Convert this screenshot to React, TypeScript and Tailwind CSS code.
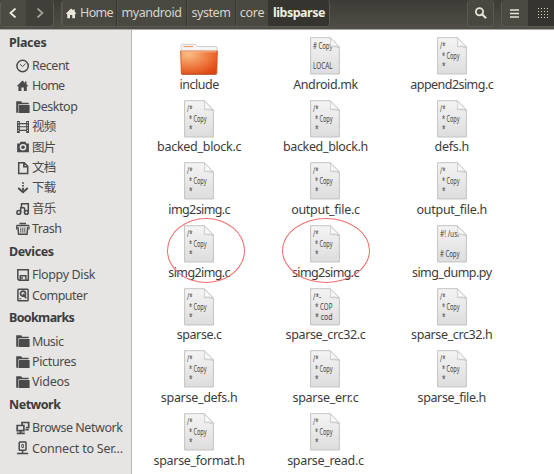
import type { ReactNode } from "react";

type Glyph =
  | "recent" | "home" | "folder" | "film" | "camera" | "doc" | "download"
  | "music" | "trash" | "floppy" | "disk" | "network" | "server";

const glyphs: Record<Glyph, ReactNode> = {
  recent: (
    <g fill="none" stroke="currentColor">
      <circle cx="6.6" cy="7" r="5.7" strokeWidth="1.5" />
      <path d="M4 5.2 6.500 7.600 9.500 4.800" strokeWidth="1" />
    </g>
  ),
  home: <path d="M6.500 1.600.7 7.200h1.700v4.900h3V8.600h2.400v3.500h3V7.200h1.700l-2-2V2.600H9v1.300z" />,
  folder: (
    <g>
      <path d="M.2 1.200h5l1 1.600h6.500v1.400H3L2 5v7.800H.2z" />
      <path d="M3.200 5h10.400v7.900H2.500V5.600z" />
    </g>
  ),
  film: (
    <path d="M1 1h2.800v2h6.400V1H13v12h-2.800v-2H3.800v2H1zm2.800 3.200v5.500h6.400V4.200zm0 2.100h6.400v1H3.800zM1.900 2.200v1h1v-1zm0 2.600v1h1v-1zm0 2.600v1h1v-1zm0 2.600v1h1v-1zm9.200-7.800v1h1v-1zm0 2.600v1h1v-1zm0 2.600v1h1v-1zm0 2.600v1h1v-1z" fillRule="evenodd" />
  ),
  camera: (
    <g>
      <path fillRule="evenodd" d="M4.400 1.700h5.200l.7 1.800h2.600v8.800H1.100V3.500h2.600zM7 4a3.300 3.300 0 1 0 0 6.600A3.300 3.300 0 0 0 7 4z" />
      <circle cx="7" cy="7.300" r="1.800" />
    </g>
  ),
  doc: <path d="M2.700 1.700h5.500l3.500 3.500v7.200h-9zM7.800 1.700v4h4" fill="none" stroke="currentColor" strokeWidth="1.500" />,
  download: (
    <g>
      <path d="M2.300 7 7 11.300 11.700 7" fill="none" stroke="currentColor" strokeWidth="1.900" />
      <path d="M6.100 1.300h1.800v1.500H6.100zM6.100 4h1.800v1.600H6.100zM6.100 6.800h1.800v3H6.100z" />
    </g>
  ),
  music: (
    <g fill="none" stroke="currentColor" strokeWidth="1.500">
      <circle cx="2.800" cy="10.400" r="1.900" />
      <circle cx="10.400" cy="10.400" r="1.900" />
      <path d="M4.700 10.400V5.800h3.900M5.500 5.800V1.700h6.800v8.700M8.600 10.400V5.800" />
    </g>
  ),
  trash: (
    <g fill="none" stroke="currentColor">
      <path d="M3.500 1.400h6.500M.6 3.400h12.400" strokeWidth="1.500" />
      <path d="M1.900 5l.7 7.300h8.400L11.700 5" strokeWidth="1.500" />
      <path d="M4.800 5.500v5.200M6.800 5.500v5.200M8.800 5.500v5.200" strokeWidth=".9" />
      <path d="M.6 3.400v4M13 3.400v4" strokeWidth="1.100" />
    </g>
  ),
  floppy: (
    <g fill="none" stroke="currentColor">
      <path d="M1.800 1.700h10.500v10.600H3.200l-1.400-1.400z" strokeWidth="1.500" />
      <path d="M4.300 12V7.800h5.600V12M6 9v2.300" strokeWidth="1.400" />
    </g>
  ),
  disk: (
    <g fill="none" stroke="currentColor">
      <rect x="1.900" y="1.200" width="10.200" height="11.600" rx=".8" strokeWidth="1.500" />
      <circle cx="7" cy="5.700" r="2.500" strokeWidth="1.700" />
      <path d="m7 6 3.200 4.300" strokeWidth="1.700" />
      <path d="M3.300 10.800h2" />
    </g>
  ),
  network: (
    <g fill="none" stroke="currentColor" strokeWidth="1.700">
      <path d="M1.200 4.500h6.700v5.200H1.200zM.8 12.300h8M4.600 10v2" />
      <path d="M6 4V1.500h6.700v5H10M9.300 8.600h3.500" />
    </g>
  ),
  server: (
    <g fill="none" stroke="currentColor" strokeWidth="1.500">
      <rect x="3.200" y="1" width="6.800" height="8.300" rx=".7" />
      <path d="M6.600 9.500v3M1 12.400h11.200" />
      <path d="M5.800 3.500h1.600v3H5.800z" strokeWidth=".9" />
    </g>
  ),
};

function Icon({ name, className }: { name: Glyph; className: string }) {
  return (
    <svg viewBox="0 0 14 14" fill="currentColor" className={className}>
      {glyphs[name]}
    </svg>
  );
}

const sections: { title: string; track: string; items: [Glyph, string, string][] }[] = [
  {
    title: "Places",
    track: "tracking-[-0.3px]",
    items: [
      ["recent", "Recent", "tracking-[-0.5px]"],
      ["home", "Home", "tracking-[-0.85px]"],
      ["folder", "Desktop", "tracking-[-0.45px]"],
      ["film", "视频", "tracking-[-0.7px]"],
      ["camera", "图片", "tracking-[-0.7px]"],
      ["doc", "文档", "tracking-[-0.7px]"],
      ["download", "下载", "tracking-[-0.7px]"],
      ["music", "音乐", "tracking-[-0.7px]"],
      ["trash", "Trash", "tracking-[-0.5px]"],
    ],
  },
  {
    title: "Devices",
    track: "tracking-[-0.4px]",
    items: [
      ["floppy", "Floppy Disk", "tracking-[-0.35px]"],
      ["disk", "Computer", "tracking-[-0.5px]"],
    ],
  },
  {
    title: "Bookmarks",
    track: "tracking-[-0.65px]",
    items: [
      ["folder", "Music", "tracking-[-0.6px]"],
      ["folder", "Pictures", "tracking-[-0.35px]"],
      ["folder", "Videos", "tracking-[-0.25px]"],
    ],
  },
  {
    title: "Network",
    track: "tracking-[-0.5px]",
    items: [
      ["network", "Browse Network", "tracking-[-0.45px]"],
      ["server", "Connect to Ser…", "tracking-[-0.2px]"],
    ],
  },
];

type Preview = "folder" | "c" | "mk" | "py" | "crc";

const files: [string, Preview, string][] = [
  ["include", "folder", "tracking-[-0.5px]"],
  ["Android.mk", "mk", "tracking-[-0.4px]"],
  ["append2simg.c", "c", "tracking-[-0.55px]"],
  ["backed_block.c", "c", "tracking-[-0.28px]"],
  ["backed_block.h", "c", "tracking-[-0.35px]"],
  ["defs.h", "c", "tracking-[-0.3px]"],
  ["img2simg.c", "c", "tracking-[-0.6px]"],
  ["output_file.c", "c", "tracking-[-0.3px]"],
  ["output_file.h", "c", "tracking-[-0.3px]"],
  ["simg2img.c", "c", "tracking-[-0.6px]"],
  ["simg2simg.c", "c", "tracking-[-0.6px]"],
  ["simg_dump.py", "py", "tracking-[-0.55px]"],
  ["sparse.c", "c", "tracking-[-0.4px]"],
  ["sparse_crc32.c", "crc", "tracking-[-0.38px]"],
  ["sparse_crc32.h", "c", "tracking-[-0.38px]"],
  ["sparse_defs.h", "c", "tracking-[-0.3px]"],
  ["sparse_err.c", "c", "tracking-[-0.27px]"],
  ["sparse_file.h", "c", "tracking-[-0.38px]"],
  ["sparse_format.h", "c", "tracking-[-0.3px]"],
  ["sparse_read.c", "c", "tracking-[-0.3px]"],
];

const lines: Record<Exclude<Preview, "folder">, [number, number, number, string][]> = {
  c: [[3, 11.500, 5.500, "/*"], [5, 21.500, 17.500, "* Copy"], [5, 31.500, 3.500, "*"]],
  mk: [[3, 12, 19.500, "# Copy"], [3, 31.500, 19.500, "LOCAL"]],
  py: [[3, 12, 20, "#! /usr"], [3, 31.500, 19.500, "# Copy"]],
  crc: [[3, 11.500, 8, "/*-"], [5, 21.500, 17.500, "* COP"], [5, 31.500, 17.500, "* cod"]],
};

function Thumb({ kind }: { kind: Preview }) {
  if (kind === "folder") {
    return (
      <svg viewBox="0 0 38 38" className="h-[38px] w-[38px]">
        <defs>
          <radialGradient id="orange" cx=".22" cy=".15" r="1">
            <stop offset="0" stopColor="#f9bd83" />
            <stop offset=".45" stopColor="#f0854b" />
            <stop offset="1" stopColor="#df4510" />
          </radialGradient>
        </defs>
        <path d="M1 13V8.500q0-1.200 1.200-1.200h12.600q1 0 1.600 1l1 1.200h18.200q1.400 0 1.400 1.400V16H1z" fill="#f6f6f6" stroke="#c5c5c5" strokeWidth=".8" />
        <path d="M3.500 9.500h9.500" stroke="#f2a16f" strokeWidth="1.300" />
        <path d="M.6 14h36.800l-.6 22.300q0 .7-1 .7H2.200q-.9 0-.9-.7z" fill="url(#orange)" stroke="#cd5020" strokeWidth=".8" />
        <path d="M1.400 14.800h35.200" stroke="#fbc59f" strokeWidth=".8" />
        <path d="M1.500 37.300h35" stroke="#a83b18" strokeWidth=".8" />
      </svg>
    );
  }
  return (
    <svg viewBox="0 0 30 38" className="h-[38px] w-[30px]">
      <defs>
        <linearGradient id="paper" x2="0" y2="1">
          <stop offset="0" stopColor="#f4f4f4" />
          <stop offset="1" stopColor="#dddddd" />
        </linearGradient>
      </defs>
      <path d="M.6.7h19.600l9.200 9.300v27H.6z" fill="url(#paper)" stroke="#bebebe" strokeWidth=".9" />
      <g fill="#444444" fontSize="8" fontFamily="'Noto Sans', sans-serif">
        {lines[kind].map(([x, y, w, text]) => (
          <text key={y} x={x} y={y} textLength={w} lengthAdjust="spacingAndGlyphs">{text}</text>
        ))}
      </g>
      <path d="M20.200.7q1.200 4 0 8.500 5-.8 9.200.8z" fill="#fafafa" fillOpacity=".85" stroke="#c4c4c4" strokeWidth=".8" />
      <path d="M20.400 9.600q5-.2 8.600 1" fill="none" stroke="#d0d0d0" />
    </svg>
  );
}

const crumb = "flex items-center justify-center border-r border-[#37352f] shadow-[inset_1px_0_0_#55534b]";

function Header() {
  return (
    <header className="flex h-[30px] shrink-0 items-start border-b border-[#aaa8a2] bg-linear-to-b from-[#3d3c37] to-[#504e46] text-[12.5px] text-[#d9d5cb]">
      <div className="flex h-[27px] w-[54px] rounded-[4px] border border-t-0 border-[#5b5951] bg-[#403f39]">
        <div className="flex w-[25px] items-center justify-center bg-[#4b4a43] pr-[2px]">
          <svg viewBox="0 0 8 10" className="h-[10px] w-[8px]"><path d="M6.500.5 1.500 5l5 4.500" fill="none" stroke="#f0ece1" strokeWidth="1.800" /></svg>
        </div>
        <div className="flex flex-1 items-center justify-center">
          <svg viewBox="0 0 8 10" className="h-[10px] w-[8px]"><path d="M1.500.5 6.500 5l-5 4.500" fill="none" stroke="#a5a299" strokeWidth="1.700" /></svg>
        </div>
      </div>
      <nav className="ml-[7px] flex h-[27px] w-[269px] overflow-hidden rounded-[4px] border border-t-0 border-[#5b5951] bg-[#494841]">
        <div className={`${crumb} w-[55px] gap-[2px]`}>
          <Icon name="home" className="h-[13px] w-[13px] text-[#ebe6da]" />
          <span className="tracking-[-0.7px]">Home</span>
        </div>
        <div className={`${crumb} w-[70px]`}><span className="tracking-[-0.45px]">myandroid</span></div>
        <div className={`${crumb} w-[49px]`}><span className="tracking-[-0.45px]">system</span></div>
        <div className={`${crumb} w-[33px]`}><span className="tracking-[-0.3px]">core</span></div>
        <div className="flex flex-1 items-center justify-center bg-[#35342f] font-bold text-[#f0ece2]"><span className="tracking-[-0.5px]">libsparse</span></div>
      </nav>
      <div className="ml-auto flex h-[27px] w-[27px] items-center justify-center rounded-[4px] border border-t-0 border-[#5b5951] bg-[#484740]">
        <svg viewBox="0 0 12 12" className="h-[12px] w-[12px]"><circle cx="4.500" cy="4.700" r="3.600" fill="none" stroke="#e8e4d9" strokeWidth="1.800" /><path d="m7.100 7.300 4 4" stroke="#e8e4d9" strokeWidth="2" /></svg>
      </div>
      <div className="ml-[7px] flex h-[27px] w-[53px] overflow-hidden rounded-l-[4px] border border-t-0 border-r-0 border-[#5b5951]">
        <div className="flex w-[26px] items-center justify-center bg-[#4a4942] pr-[2px]">
          <svg viewBox="0 0 9 9" className="h-[9px] w-[9px]"><path d="M0 1h9M0 4.500h9M0 8h9" stroke="#e8e4d9" strokeWidth="1.700" /></svg>
        </div>
        <div className="flex flex-1 items-center justify-center bg-[#35342f] pl-[4px]">
          <svg viewBox="0 0 10 10" className="h-[10px] w-[10px]"><path d="M0 .5h10M0 3.500h10M0 6.500h10M0 9.500h10" stroke="#d5d1c7" strokeWidth="1" strokeDasharray="1 2" /></svg>
        </div>
      </div>
    </header>
  );
}

export default function App() {
  return (
    <div className="flex h-[474px] w-[554px] flex-col overflow-hidden bg-white font-['Noto_Sans','Noto_Sans_CJK_SC',sans-serif] leading-none">
      <Header />
      <div className="flex min-h-0 flex-1">
        <aside className="w-[132px] shrink-0 border-r border-[#bab8b5] bg-[#e6e5e4] text-[12.5px] text-[#4a4a4a]">
          {sections.map((section) => (
            <section key={section.title}>
              <h2 className="flex h-[25.6px] items-center pl-[9px] font-bold text-[#3c3c3c]">
                <span className={section.track}>{section.title}</span>
              </h2>
              {section.items.map(([icon, label, track]) => (
                <div key={label} className="flex h-[20.4px] items-center gap-[2px] pl-[16px] whitespace-nowrap">
                  <Icon name={icon} className="h-[14px] w-[14px] shrink-0" />
                  <span className={`${track} pt-[1px]`}>{label}</span>
                </div>
              ))}
            </section>
          ))}
        </aside>
        <main className="relative flex-1 pt-[7px] pl-[4px]">
          <div className="grid auto-rows-[62.7px] grid-cols-[repeat(3,126.300px)] text-[12.5px] text-[#3c3c3c]">
            {files.map(([name, kind, track]) => (
              <div key={name} className="flex flex-col items-center gap-[2.5px]">
                <Thumb kind={kind} />
                <span className={`${track} leading-[14px] whitespace-nowrap`}>{name}</span>
              </div>
            ))}
          </div>
          <div className="absolute top-[188px] left-[35px] h-[65px] w-[78px] rounded-[50%] border border-[#f36d6d]" />
          <div className="absolute top-[188px] left-[150px] h-[65px] w-[88px] rounded-[50%] border border-[#f36d6d]" />
        </main>
      </div>
    </div>
  );
}
